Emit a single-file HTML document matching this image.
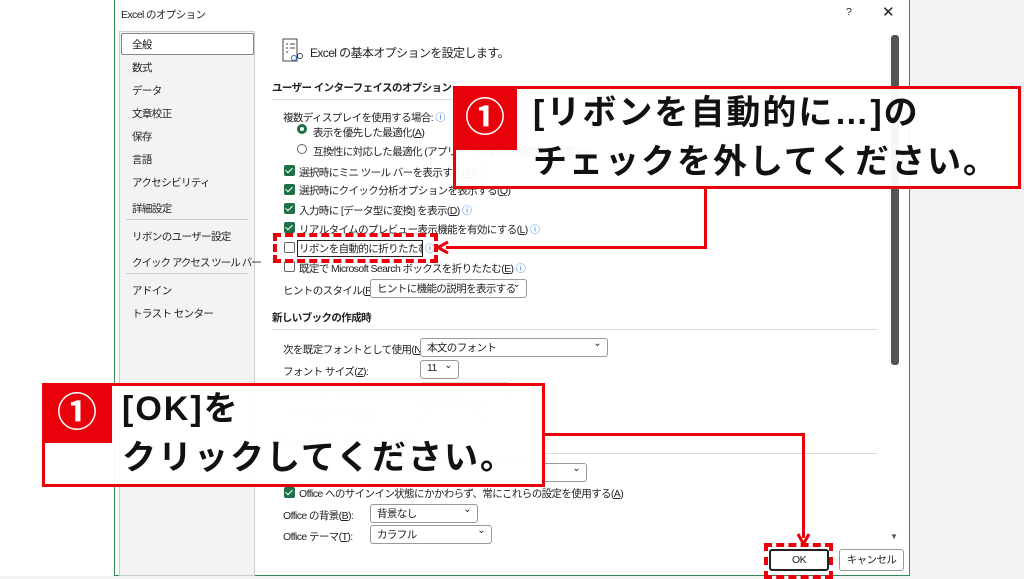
<!DOCTYPE html>
<html><head><meta charset="utf-8"><style>
*{margin:0;padding:0;box-sizing:border-box}
body{width:1024px;height:576px;overflow:hidden;background:#f3f3f3;position:relative;font-family:"Liberation Sans","Noto Sans CJK JP",sans-serif;font-size:10.5px;letter-spacing:-0.6px;color:#222}
.a{position:absolute;white-space:nowrap}
.dlg{position:absolute;left:114px;top:0;width:796px;height:576px;background:#fff;border:1px solid #2e8b57;border-top:none}
.nav{position:absolute;left:119px;top:31px;width:136px;height:545px;background:#f3f3f3;border:1px solid #ccc}
.cb{position:absolute;width:11px;height:11px;background:#1e7145;border-radius:2px}
.cb:after{content:"";position:absolute;left:3px;top:1px;width:3px;height:6px;border:solid #fff;border-width:0 1.5px 1.5px 0;transform:rotate(45deg)}
.cbe{position:absolute;width:11px;height:11px;border:1px solid #666;border-radius:2px;background:#fff}
.sel{position:absolute;height:19px;border:1px solid #999;border-radius:3px;background:#fff;padding:1px 6px;font-size:10.5px;white-space:nowrap;overflow:hidden}
.sel:after{content:"⌄";position:absolute;right:6px;top:-1px;font-size:10px}
.i{color:#1a6fd0;font-size:10px}
.hr{position:absolute;height:1px;background:#ddd}
.call{position:absolute;border:3px solid #e8000b;background:rgba(255,255,255,0.95)}
.num{position:absolute;background:#e8000b;color:#fff;font-size:40px;text-align:center;font-weight:bold;letter-spacing:0}
.ct{position:absolute;font-size:34px;font-weight:bold;color:#111;line-height:50px;letter-spacing:2px}
.red{position:absolute;background:#e8000b}
.dash{position:absolute;border:4px dashed #e8000b}
</style></head><body>
<div class="a" style="left:0;top:0;width:114px;height:576px;background:#fff"></div>
<div class="dlg"></div>
<div class="a" style="left:121px;top:7px">Excel のオプション</div>
<div class="a" style="left:846px;top:6px">?</div>
<div class="a" style="left:882px;top:3px;font-size:15px">✕</div>
<div class="nav"></div>
<div class="a" style="left:121px;top:33px;width:133px;height:22px;border:1px solid #888;border-radius:2px;background:#fff"></div>
<div class="a" style="left:132px;top:37px">全般</div>
<div class="a" style="left:132px;top:60px">数式</div>
<div class="a" style="left:132px;top:83px">データ</div>
<div class="a" style="left:132px;top:106px">文章校正</div>
<div class="a" style="left:132px;top:129px">保存</div>
<div class="a" style="left:132px;top:152px">言語</div>
<div class="a" style="left:132px;top:175px">アクセシビリティ</div>
<div class="a" style="left:132px;top:201px">詳細設定</div>
<div class="hr" style="left:126px;top:219px;width:122px;background:#ccc"></div>
<div class="a" style="left:132px;top:229px">リボンのユーザー設定</div>
<div class="a" style="left:132px;top:255px;letter-spacing:-1px">クイック アクセス ツール バー</div>
<div class="hr" style="left:126px;top:273px;width:122px;background:#ccc"></div>
<div class="a" style="left:132px;top:283px">アドイン</div>
<div class="a" style="left:132px;top:306px">トラスト センター</div>

<svg class="a" style="left:282px;top:38px" width="24" height="26" viewBox="0 0 24 26"><rect x="1" y="1" width="14" height="22" fill="none" stroke="#444"/><path d="M4 6h2M8 6h5M4 10h2M8 10h5M4 14h2" stroke="#444"/><circle cx="12" cy="20" r="2.5" fill="none" stroke="#1a6fd0"/><circle cx="18" cy="18" r="2.5" fill="none" stroke="#444"/></svg>
<div class="a" style="left:310px;top:44px;font-size:12px">Excel の基本オプションを設定します。</div>
<div class="a" style="left:272px;top:80px;font-weight:bold">ユーザー インターフェイスのオプション</div>
<div class="hr" style="left:272px;top:99px;width:605px"></div>
<div class="a" style="left:283px;top:109px">複数ディスプレイを使用する場合: <span class="i">ⓘ</span></div>
<div class="a" style="left:297px;top:124px;width:10px;height:10px;border:3px solid #1e7145;border-radius:50%"></div>
<div class="a" style="left:313px;top:125px">表示を優先した最適化(<u>A</u>)</div>
<div class="a" style="left:297px;top:144px;width:10px;height:10px;border:1px solid #666;border-radius:50%"></div>
<div class="a" style="left:313px;top:144px">互換性に対応した最適化 (アプリケーションの再起動が必要)(C)</div>
<div class="cb" style="left:284px;top:165px"></div><div class="a" style="left:299px;top:164px">選択時にミニ ツール バーを表示する(<u>M</u>) <span class="i">ⓘ</span></div>
<div class="cb" style="left:284px;top:184px"></div><div class="a" style="left:299px;top:183px">選択時にクイック分析オプションを表示する(<u>Q</u>)</div>
<div class="cb" style="left:284px;top:203px"></div><div class="a" style="left:299px;top:202px">入力時に [データ型に変換] を表示(<u>D</u>) <span class="i">ⓘ</span></div>
<div class="cb" style="left:284px;top:222px"></div><div class="a" style="left:299px;top:221px">リアルタイムのプレビュー表示機能を有効にする(<u>L</u>) <span class="i">ⓘ</span></div>
<div class="cbe" style="left:284px;top:242px"></div><div class="a" style="left:297px;top:240px;border:1px solid #222;padding:0 1px;width:126px;overflow:hidden">リボンを自動的に折りたたむ(<u>N</u>)</div><div class="a i" style="left:425px;top:240px">ⓘ</div>
<div class="cbe" style="left:284px;top:261px"></div><div class="a" style="left:299px;top:260px">既定で Microsoft Search ボックスを折りたたむ(<u>E</u>) <span class="i">ⓘ</span></div>
<div class="a" style="left:283px;top:283px">ヒントのスタイル(<u>R</u>):</div>
<div class="sel" style="left:370px;top:279px;width:157px">ヒントに機能の説明を表示する</div>
<div class="a" style="left:272px;top:310px;font-weight:bold">新しいブックの作成時</div>
<div class="hr" style="left:272px;top:329px;width:605px"></div>
<div class="a" style="left:283px;top:342px">次を既定フォントとして使用(<u>N</u>):</div>
<div class="sel" style="left:420px;top:338px;width:188px">本文のフォント</div>
<div class="a" style="left:283px;top:364px">フォント サイズ(<u>Z</u>):</div>
<div class="sel" style="left:420px;top:360px;width:39px">11</div>
<div class="a" style="left:283px;top:386px;color:#ccc">新しいシートの既定のビュー(V):</div>
<div class="sel" style="left:420px;top:382px;width:89px;color:#ccc;border-color:#ddd">標準ビュー</div>
<div class="a" style="left:283px;top:407px;color:#ccc">ブックのシート数(S):</div>
<div class="sel" style="left:420px;top:404px;width:65px;color:#ccc;border-color:#ddd">1</div>
<div class="a" style="left:272px;top:434px;color:#bbb;font-weight:bold">Microsoft Office のユーザー設定</div>
<div class="hr" style="left:272px;top:453px;width:605px"></div>
<div class="sel" style="left:370px;top:463px;width:217px"></div>
<div class="cb" style="left:284px;top:487px"></div><div class="a" style="left:299px;top:486px">Office へのサインイン状態にかかわらず、常にこれらの設定を使用する(<u>A</u>)</div>
<div class="a" style="left:283px;top:508px">Office の背景(<u>B</u>):</div>
<div class="sel" style="left:370px;top:504px;width:108px">背景なし</div>
<div class="a" style="left:283px;top:529px">Office テーマ(<u>T</u>):</div>
<div class="sel" style="left:370px;top:525px;width:122px">カラフル</div>
<div class="a" style="left:891px;top:35px;width:8px;height:330px;background:#555;border-radius:3px"></div>
<div class="a" style="left:890px;top:532px;font-size:8px;color:#555">▼</div>
<div class="a" style="left:769px;top:549px;width:60px;height:22px;border:2px solid #222;border-radius:3px;text-align:center;line-height:18px;background:#fff">OK</div>
<div class="a" style="left:839px;top:549px;width:65px;height:22px;border:1px solid #999;border-radius:3px;text-align:center;line-height:20px;background:#fff">キャンセル</div>

<div class="dash" style="left:273px;top:233px;width:165px;height:30px"></div>
<div class="dash" style="left:764px;top:543px;width:69px;height:36px"></div>
<div class="red" style="left:704px;top:188px;width:3px;height:61px"></div>
<div class="red" style="left:446px;top:246px;width:261px;height:3px"></div>
<svg class="a" style="left:436px;top:240px" width="14" height="15"><path d="M12 2L2 7.5L12 13" fill="none" stroke="#e8000b" stroke-width="3"/></svg>
<div class="red" style="left:545px;top:433px;width:260px;height:3px"></div>
<div class="red" style="left:802px;top:433px;width:3px;height:105px"></div>
<svg class="a" style="left:796px;top:532px" width="15" height="14"><path d="M2 2L7.5 12L13 2" fill="none" stroke="#e8000b" stroke-width="3"/></svg>

<div class="call" style="left:453px;top:86px;width:568px;height:103px"></div>
<div class="num" style="left:453px;top:86px;width:64px;height:64px;line-height:64px">①</div>
<div class="ct" style="left:533px;top:88px">[リボンを自動的に…]の</div>
<div class="ct" style="left:533px;top:137px">チェックを外してください。</div>

<div class="call" style="left:42px;top:383px;width:503px;height:104px"></div>
<div class="num" style="left:42px;top:383px;width:70px;height:60px;line-height:60px">①</div>
<div class="ct" style="left:122px;top:384px">[OK]を</div>
<div class="ct" style="left:122px;top:433px">クリックしてください。</div>
</body></html>
